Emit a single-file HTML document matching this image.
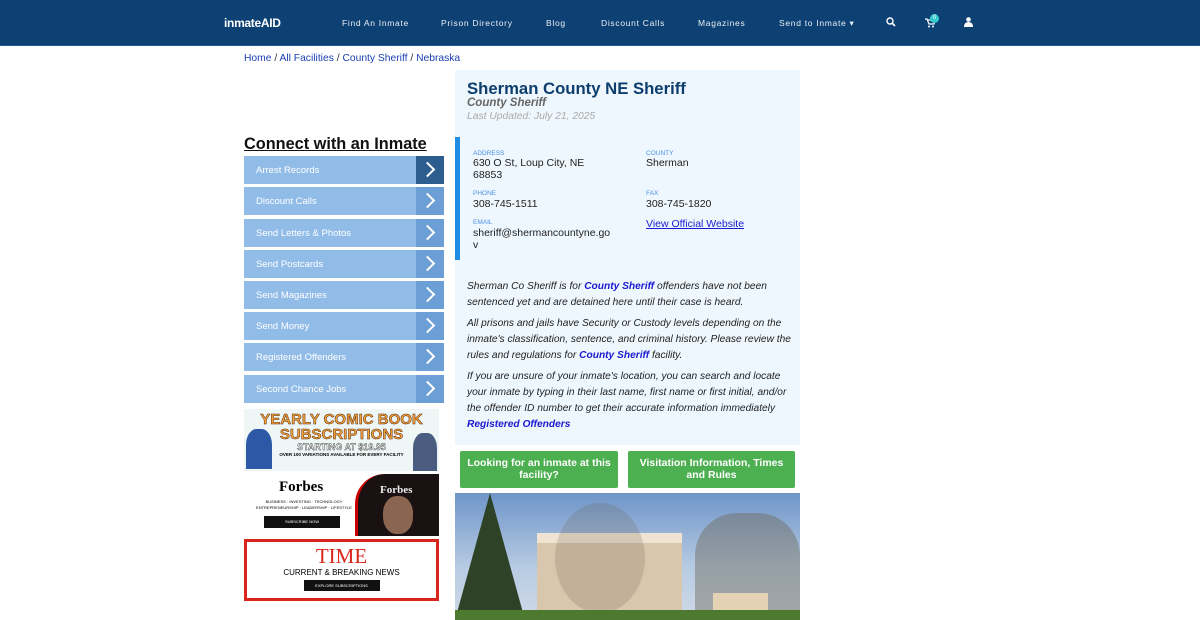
<!DOCTYPE html>
<html><head><meta charset="utf-8"><style>
*{margin:0;padding:0;box-sizing:border-box}
body{width:1200px;height:620px;overflow:hidden;background:#fff;font-family:"Liberation Sans",Arial,sans-serif;position:relative}
.nav{position:absolute;left:0;top:0;width:1200px;height:46px;background:#0d4174;border-bottom:1px solid #1b5a96}
.nav span{position:absolute;top:18px;color:#e8eef5;font-size:8.5px;letter-spacing:.7px}
.logo{position:absolute;left:224px;top:16px;color:#fff;font-size:12px;font-weight:bold;letter-spacing:-.3px}
.bc{position:absolute;left:244px;top:53px;font-size:10.3px;color:#333}
.bc a{color:#1a3fb3;text-decoration:none}
h2.conn{position:absolute;left:244px;top:135px;font-size:16.3px;font-weight:bold;text-decoration:underline;color:#111}
.btn{position:absolute;left:244px;width:200px;height:28px;background:#92bce8}
.btn span{position:absolute;left:12px;top:9px;color:#fff;font-size:9.5px}
.btn i{position:absolute;right:0;top:0;width:28px;height:28px;background:#6c9fd6}
.btn i:after{content:"";position:absolute;left:6px;top:8px;width:9px;height:9px;border-right:2px solid #fff;border-top:2px solid #fff;transform:rotate(45deg)}
.card{position:absolute;left:455px;top:70px;width:345px;height:375px;background:#eef7fe}
.title{position:absolute;left:467px;top:79px;color:#0d3e6e;font-size:16.7px;font-weight:bold}
.sub{position:absolute;left:467px;top:97px;color:#666;font-size:11.5px;font-weight:bold;font-style:italic}
.upd{position:absolute;left:467px;top:111px;color:#aaa;font-size:10.3px;font-style:italic}
.bar{position:absolute;left:455px;top:137px;width:5px;height:123px;background:#1f8de4}
.lab{position:absolute;font-size:6.5px;color:#4a90e2}
.val{position:absolute;font-size:10.5px;color:#222;line-height:12px}
.desc{position:absolute;left:467px;top:279px;width:325px;font-size:10.2px;font-style:italic;color:#222;line-height:16px}
.desc p{margin-bottom:5px}
.desc b{color:#1a1ad0}
.g{position:absolute;top:451px;height:37px;background:#4caf50;color:#fff;font-size:10.5px;font-weight:bold;text-align:center;line-height:11.5px;padding-top:7px;border-radius:2px}
.ad{position:absolute;left:244px;width:195px}
</style></head><body>
<div class="nav">
<div class="logo">inmateAID</div>
<span style="left:342px">Find An Inmate</span>
<span style="left:441px">Prison Directory</span>
<span style="left:546px">Blog</span>
<span style="left:601px">Discount Calls</span>
<span style="left:698px">Magazines</span>
<span style="left:779px">Send to Inmate ▾</span>
<svg style="position:absolute;left:886px;top:17px" width="10" height="10" viewBox="0 0 10 10"><circle cx="4" cy="4" r="3" fill="none" stroke="#fff" stroke-width="1.4"/><path d="M6 6l3 3" stroke="#fff" stroke-width="1.6"/></svg>
<svg style="position:absolute;left:925px;top:18px" width="10" height="10" viewBox="0 0 10 10"><path d="M0 1h2l2 5h5l1-4H3" fill="none" stroke="#fff" stroke-width="1.2"/><circle cx="4" cy="8.5" r="1" fill="#fff"/><circle cx="8" cy="8.5" r="1" fill="#fff"/></svg>
<div style="position:absolute;left:930px;top:14px;width:9px;height:9px;border-radius:50%;background:#3cc;color:#fff;font-size:6px;text-align:center;line-height:9px">0</div>
<svg style="position:absolute;left:964px;top:17px" width="9" height="10" viewBox="0 0 9 10"><circle cx="4.5" cy="2.5" r="2.3" fill="#fff"/><path d="M0 10q0-5 4.5-5t4.5 5z" fill="#fff"/></svg>
</div>
<div class="bc"><a>Home</a> / <a>All Facilities</a> / <a>County Sheriff</a> / <a>Nebraska</a></div>
<h2 class="conn">Connect with an Inmate</h2>
<div class="btn" style="top:156px"><span>Arrest Records</span><i style="background:#2d5d8e"></i></div>
<div class="btn" style="top:187px"><span>Discount Calls</span><i></i></div>
<div class="btn" style="top:219px"><span>Send Letters &amp; Photos</span><i></i></div>
<div class="btn" style="top:250px"><span>Send Postcards</span><i></i></div>
<div class="btn" style="top:281px"><span>Send Magazines</span><i></i></div>
<div class="btn" style="top:312px"><span>Send Money</span><i></i></div>
<div class="btn" style="top:343px"><span>Registered Offenders</span><i></i></div>
<div class="btn" style="top:375px"><span>Second Chance Jobs</span><i></i></div>
<div class="ad" style="top:409px;height:62px;background:#eef6f6;text-align:center">
<div style="color:#f2a23a;font-weight:bold;font-size:15px;line-height:15px;padding-top:3px;-webkit-text-stroke:.5px #5a2a10">YEARLY COMIC BOOK<br>SUBSCRIPTIONS</div>
<div style="color:#fff;font-size:9px;font-weight:bold;-webkit-text-stroke:.4px #333">STARTING AT $19.95</div>
<div style="font-size:4.5px;font-weight:bold">OVER 100 VARIATIONS AVAILABLE FOR EVERY FACILITY</div>
<div style="position:absolute;left:2px;top:20px;width:26px;height:40px;background:#2c58a6;border-radius:40% 40% 0 0"></div>
<div style="position:absolute;right:2px;top:24px;width:24px;height:38px;background:#4a5d80;border-radius:40% 40% 0 0"></div>
</div>
<div class="ad" style="top:474px;height:62px;background:#fff">
<div style="position:absolute;left:35px;top:5px;font-family:'Liberation Serif',serif;font-weight:bold;font-size:15px">Forbes</div>
<div style="position:absolute;left:8px;top:25px;font-size:4px;width:104px;text-align:center;line-height:6px;white-space:nowrap">BUSINESS · INVESTING · TECHNOLOGY<br>ENTREPRENEURSHIP · LEADERSHIP · LIFESTYLE</div>
<div style="position:absolute;left:20px;top:42px;width:76px;height:12px;background:#111;color:#fff;font-size:4px;text-align:center;line-height:12px">SUBSCRIBE NOW</div>
<div style="position:absolute;left:111px;top:0;width:84px;height:62px;background:#1a1212;border-left:3px solid #c00;border-radius:30px 0 0 0"><div style="color:#eee;font-family:'Liberation Serif',serif;font-weight:bold;font-size:11px;padding:10px 0 0 22px">Forbes</div><div style="position:absolute;left:25px;top:22px;width:30px;height:38px;background:#8a6650;border-radius:45%"></div></div>
</div>
<div class="ad" style="top:539px;height:62px;border:3px solid #d9261c;text-align:center">
<div style="color:#d9261c;font-family:'Liberation Serif',serif;font-size:21px;line-height:22px;padding-top:3px">TIME</div>
<div style="font-size:8px;margin-top:1px">CURRENT &amp; BREAKING NEWS</div>
<div style="margin:3px auto 0;width:76px;height:11px;background:#111;color:#fff;font-size:4px;line-height:11px">EXPLORE SUBSCRIPTIONS</div>
</div>
<div class="card"></div>
<div class="title">Sherman County NE Sheriff</div>
<div class="sub">County Sheriff</div>
<div class="upd">Last Updated: July 21, 2025</div>
<div class="bar"></div>
<div class="lab" style="left:473px;top:150px">ADDRESS</div>
<div class="val" style="left:473px;top:157px">630 O St, Loup City, NE<br>68853</div>
<div class="lab" style="left:646px;top:150px">COUNTY</div>
<div class="val" style="left:646px;top:157px">Sherman</div>
<div class="lab" style="left:473px;top:190px">PHONE</div>
<div class="val" style="left:473px;top:198px">308-745-1511</div>
<div class="lab" style="left:646px;top:190px">FAX</div>
<div class="val" style="left:646px;top:198px">308-745-1820</div>
<div class="lab" style="left:473px;top:219px">EMAIL</div>
<div class="val" style="left:473px;top:227px">sheriff@shermancountyne.go<br>v</div>
<div class="val" style="left:646px;top:218px;color:#1a1ad0;text-decoration:underline">View Official Website</div>
<div class="desc">
<p>Sherman Co Sheriff is for <b>County Sheriff</b> offenders have not been sentenced yet and are detained here until their case is heard.</p>
<p>All prisons and jails have Security or Custody levels depending on the inmate's classification, sentence, and criminal history. Please review the rules and regulations for <b>County Sheriff</b> facility.</p>
<p>If you are unsure of your inmate's location, you can search and locate your inmate by typing in their last name, first name or first initial, and/or the offender ID number to get their accurate information immediately <b>Registered Offenders</b></p>
</div>
<div class="g" style="left:460px;width:158px">Looking for an inmate at this<br>facility?</div>
<div class="g" style="left:628px;width:167px">Visitation Information, Times<br>and Rules</div>
<div style="position:absolute;left:455px;top:493px;width:345px;height:127px;overflow:hidden;background:linear-gradient(#6f95c8,#b8cce4 60%,#cfd9e6)">
<div style="position:absolute;left:0;top:0;width:70px;height:127px;background:#2e4228;clip-path:polygon(50% 0,100% 100%,0 100%)"></div>
<div style="position:absolute;left:82px;top:40px;width:145px;height:87px;background:#d9c7ad"></div>
<div style="position:absolute;left:82px;top:40px;width:145px;height:10px;background:#efe4d2"></div>
<div style="position:absolute;left:240px;top:20px;width:105px;height:107px;background:#6f6a5c;opacity:.45;border-radius:40% 40% 0 0"></div>
<div style="position:absolute;left:100px;top:10px;width:90px;height:110px;background:#6a5a48;opacity:.2;border-radius:50%"></div>
<div style="position:absolute;left:258px;top:100px;width:55px;height:25px;background:#e4d2b4"></div>
<div style="position:absolute;left:0;top:117px;width:345px;height:10px;background:#4d7a2e"></div>
</div>
</body></html>
